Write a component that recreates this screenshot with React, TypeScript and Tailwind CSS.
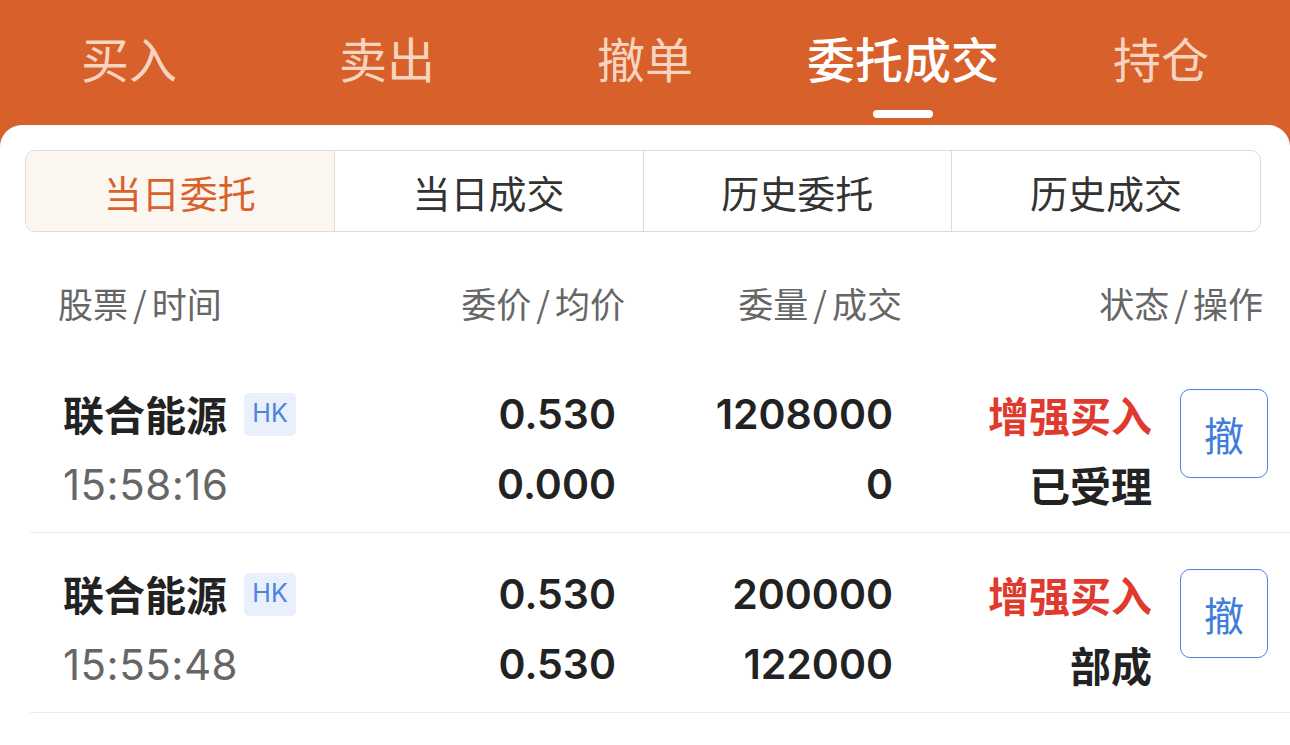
import React from 'react';

const CJK = "font-['Noto_Sans_CJK_SC',sans-serif]";
const NUM = "font-['Inter','Noto_Sans_CJK_SC',sans-serif]";

const topTabs = ['买入', '卖出', '撤单', '委托成交', '持仓'];
const segments = ['当日委托', '当日成交', '历史委托', '历史成交'];

interface Order {
  name: string;
  time: string;
  price: string;
  avg: string;
  qty: string;
  filled: string;
  side: string;
  status: string;
}

const orders: Order[] = [
  { name: '联合能源', time: '15:58:16', price: '0.530', avg: '0.000', qty: '1208000', filled: '0', side: '增强买入', status: '已受理' },
  { name: '联合能源', time: '15:55:48', price: '0.530', avg: '0.530', qty: '200000', filled: '122000', side: '增强买入', status: '部成' },
];

function HeadCell({ a, b, className }: { a: string; b: string; className: string }) {
  return (
    <div className={className}>
      {a}
      <span className="mx-[5px]">/</span>
      {b}
    </div>
  );
}

function OrderRow({ o }: { o: Order }) {
  return (
    <div className="ml-[30px] h-[180px] border-b border-[#ececec] flex items-start pt-[26px] pl-[33px]">
      <div className="w-[300px]">
        <div className="h-[70px] flex items-center">
          <span className={`${CJK} text-[41px] font-bold text-[#222]`}>{o.name}</span>
          <span className={`${NUM} ml-[17px] w-[52px] h-[43px] rounded-[5px] bg-[#e9f0fc] text-[#4a84df] text-[25px] flex items-center justify-center`}>
            HK
          </span>
        </div>
        <div className={`${NUM} h-[70px] flex items-center text-[42px] tracking-[0.5px] text-[#666]`}>{o.time}</div>
      </div>
      <div className={`${NUM} w-[253px] text-right font-semibold text-[41px] text-[#222]`}>
        <div className="h-[70px] leading-[70px]">{o.price}</div>
        <div className="h-[70px] leading-[70px]">{o.avg}</div>
      </div>
      <div className={`${NUM} w-[277px] text-right font-semibold text-[41px] text-[#222]`}>
        <div className="h-[70px] leading-[70px]">{o.qty}</div>
        <div className="h-[70px] leading-[70px]">{o.filled}</div>
      </div>
      <div className={`${CJK} w-[259px] text-right font-bold text-[41px]`}>
        <div className="h-[70px] leading-[70px] text-[#e03a2f]">{o.side}</div>
        <div className="h-[70px] leading-[70px] text-[#222]">{o.status}</div>
      </div>
      <button
        className={`${CJK} ml-[28px] mt-[10px] w-[88px] h-[89px] rounded-[10px] border-[1.5px] border-[#4a84df] text-[#3f7cdb] text-[40px] flex items-center justify-center`}
      >
        撤
      </button>
    </div>
  );
}

export default function App() {
  return (
    <div className="w-[1290px] h-[745px] bg-[#d7602b] flex flex-col overflow-hidden">
      <div className="h-[125px] grid grid-cols-5 shrink-0">
        {topTabs.map((t, i) => (
          <div key={t} className="flex flex-col items-center pt-[26px]">
            <span
              className={`${CJK} text-[48px] leading-[62px] ${
                i === 3 ? 'text-white font-medium' : 'text-[#f7d4c0]'
              }`}
            >
              {t}
            </span>
            {i === 3 && <span className="mt-[22px] w-[60px] h-[8px] rounded-full bg-white" />}
          </div>
        ))}
      </div>

      <div className="flex-1 bg-white rounded-t-[22px]">
        <div className="mt-[25px] ml-[25px] mr-[29px] h-[82px] flex border border-[#dcdcdc] rounded-[10px] overflow-hidden">
          {segments.map((s, i) => (
            <div
              key={s}
              className={`${CJK} flex-1 flex items-center justify-center text-[38px] ${
                i > 0 ? 'border-l border-[#dcdcdc] text-[#333]' : 'bg-[#fcf6f1] text-[#d9622c]'
              }`}
            >
              {s}
            </div>
          ))}
        </div>

        <div className={`${CJK} mt-[21px] h-[100px] flex items-center pl-[58px] text-[35px] text-[#666]`}>
          <HeadCell a="股票" b="时间" className="w-[300px]" />
          <HeadCell a="委价" b="均价" className="w-[267px] text-right" />
          <HeadCell a="委量" b="成交" className="w-[277px] text-right" />
          <HeadCell a="状态" b="操作" className="w-[361px] text-right" />
        </div>

        {orders.map((o, i) => (
          <OrderRow key={i} o={o} />
        ))}
      </div>
    </div>
  );
}
